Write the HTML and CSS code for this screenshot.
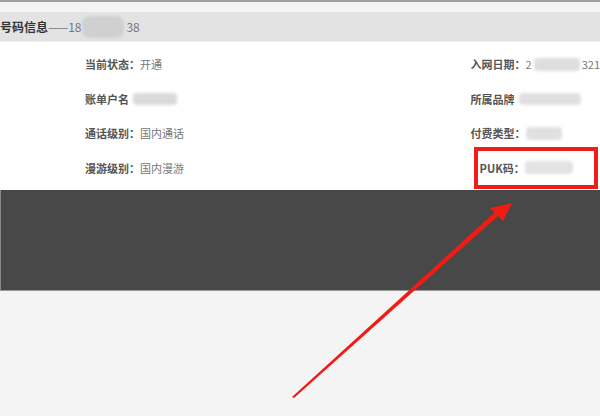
FILE: index.html
```html
<!DOCTYPE html>
<html lang="zh">
<head>
<meta charset="utf-8">
<link rel="stylesheet" href="styles.css">
</head>
<body>
<div class="page">
  <div class="topline"></div>
  <div class="header">
    <span class="htitle">号码信息</span><span class="hnum">——18<span class="blob hblob"></span>38</span>
  </div>
  <div class="info">
    <div class="col left">
      <div class="row"><span class="lab">当前状态：</span><span class="val">开通</span></div>
      <div class="row"><span class="lab">账单户名</span><span class="blob b1"></span></div>
      <div class="row"><span class="lab">通话级别：</span><span class="val">国内通话</span></div>
      <div class="row"><span class="lab">漫游级别：</span><span class="val">国内漫游</span></div>
    </div>
    <div class="col right">
      <div class="row"><span class="lab">入网日期：</span><span class="val">2</span><span class="blob b2"></span><span class="val">321</span></div>
      <div class="row"><span class="lab">所属品牌</span><span class="blob b3"></span></div>
      <div class="row"><span class="lab">付费类型：</span><span class="blob b4"></span></div>
      <div class="row puk"><span class="lab">PUK码：</span><span class="blob b5"></span></div>
    </div>
  </div>
  <div class="dark"></div>
  <div class="rest"></div>
  <div class="redbox"></div>
  <svg class="arrow" width="600" height="416" viewBox="0 0 600 416">
    <polygon points="292,397 294,398 498,216 495,212" fill="#f21b14"/>
    <polygon points="512,203 490,208 503,221" fill="#f21b14"/>
  </svg>
</div>
</body>
</html>
```
FILE: styles.css
```css
html, body {
  margin: 0;
  padding: 0;
  background: #f4f4f4;
}
.page {
  position: relative;
  width: 600px;
  height: 416px;
  overflow: hidden;
  font-family: "Noto Sans CJK SC", "Noto Sans", sans-serif;
  font-size: 11px;
  background: #f4f4f4;
}
.topline {
  height: 2px;
  background: #a0a0a0;
  margin-bottom: 10px;
}
.header {
  height: 29px;
  background: #e3e3e3;
  display: flex;
  align-items: center;
  border-bottom: 1px solid #eeeeee;
}
.htitle {
  font-size: 12px;
  font-weight: bold;
  color: #333;
}
.hnum {
  font-size: 12px;
  color: #777;
  display: inline-flex;
  align-items: center;
}
.blob {
  display: inline-block;
  background: #cfcfcf;
  filter: blur(1.5px);
  border-radius: 4px;
}
.hblob {
  width: 42px;
  height: 22px;
  background: #d0d0d0;
  border-radius: 8px;
  margin: 0 2px 0 1px;
}
.info {
  background: #fff;
  height: 148px;
  display: flex;
  padding-top: 5px;
  box-sizing: border-box;
}
.col {
  display: flex;
  flex-direction: column;
}
.left {
  padding-left: 85px;
  width: 472px;
  box-sizing: border-box;
}
.right {
  flex: 1;
}
.row {
  height: 34.5px;
  display: flex;
  align-items: center;
  white-space: nowrap;
}
.lab {
  color: #555;
  font-weight: bold;
}
.val {
  color: #777;
}
.b1 { width: 44px; height: 12px; margin-left: 4px; background: #dadada; }
.b2 { width: 46px; height: 13px; margin: 0 2px; background: #dedede; }
.b3 { width: 62px; height: 12px; margin-left: 4px; background: #e0e0e0; }
.b4 { width: 36px; height: 13px; margin-left: 0; background: #e0e0e0; }
.b5 { width: 48px; height: 13px; margin-left: 0; background: #e3e3e3; }
.puk {
  padding-left: 9px;
}
.dark {
  height: 100px;
  background: #484848;
  border-left: 1px solid #8a8a8a;
  border-bottom: 1px solid #9a9a9a;
}
.rest {
  height: 126px;
  background: #f4f4f4;
}
.redbox {
  position: absolute;
  left: 474px;
  top: 147px;
  width: 116px;
  height: 34px;
  border: 4px solid #ee1d1a;
}
.arrow {
  position: absolute;
  left: 0;
  top: 0;
}
```
